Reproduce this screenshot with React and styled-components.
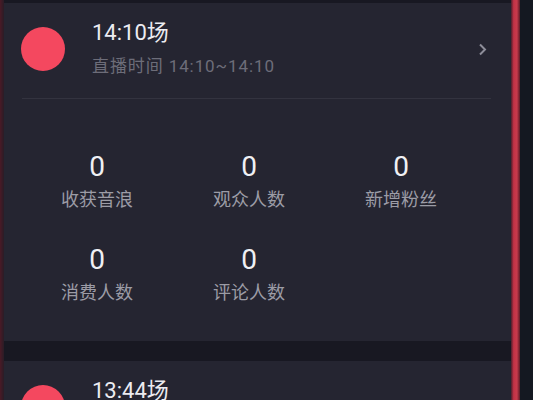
import React from 'react'
import styled, {createGlobalStyle} from 'styled-components'

const Global = createGlobalStyle`
  html, body {
    margin: 0;
    padding: 0;
    background: #1b1b26;
    font-family: Roboto, "Noto Sans CJK SC", "Noto Sans", sans-serif;
  }
`

const Frame = styled.div`
  display: flex;
  width: 533px;
  height: 400px;
  overflow: hidden;
`

const LeftEdge = styled.div`
  width: 4px;
  background: linear-gradient(to right, #4a1a26, #2a1c26);
`

const Main = styled.div`
  flex: 1;
  display: flex;
  flex-direction: column;
  gap: 20px;
  padding-top: 3px;
  background: #181822;
`

const RedLine = styled.div`
  width: 9px;
  background: linear-gradient(to right, #4a1d2a, #c23246 30%, #c83a4c 65%, #5a1a26);
`

const RightStrip = styled.div`
  width: 13px;
  background: #141821;
`

const Card = styled.div`
  background: #252531;
  flex-shrink: 0;
  padding-bottom: ${p => (p.$open ? '36px' : '0')};
`

const Header = styled.div`
  display: flex;
  align-items: center;
  height: 92px;
  padding: 0 24px 0 17px;
`

const Dot = styled.div`
  width: 44px;
  height: 44px;
  border-radius: 50%;
  background: #f4485f;
  flex-shrink: 0;
`

const Info = styled.div`
  flex: 1;
  display: flex;
  flex-direction: column;
  margin-left: 27px;
  margin-top: -2px;
`

const Title = styled.div`
  font-size: 22px;
  line-height: 26px;
  color: #ececf1;
  margin-bottom: 9px;
`

const Sub = styled.div`
  font-size: 17px;
  line-height: 22px;
  color: #6d6d79;
  letter-spacing: 0.9px;
`

const Divider = styled.div`
  height: 1px;
  margin: 3px 20px 0 18px;
  background: #33333f;
`

const Stats = styled.div`
  display: grid;
  grid-template-columns: repeat(3, 152px);
  row-gap: 32px;
  padding: 52px 0 0 17px;
`

const Stat = styled.div`
  display: flex;
  flex-direction: column;
  align-items: center;
  gap: 5px;
`

const Num = styled.div`
  font-size: 28px;
  line-height: 32px;
  color: #f0f0f4;
`

const Label = styled.div`
  font-size: 18px;
  line-height: 24px;
  color: #9c9ca6;
`

const Chevron = () => (
  <svg width="9" height="13" viewBox="0 0 9 13">
    <path d="M2 1.5 L7 6.5 L2 11.5" fill="none" stroke="#8d8d99" strokeWidth="2" />
  </svg>
)

const sessions = [
  {
    title: '14:10场',
    time: '直播时间 14:10~14:10',
    stats: [
      ['0', '收获音浪'],
      ['0', '观众人数'],
      ['0', '新增粉丝'],
      ['0', '消费人数'],
      ['0', '评论人数'],
    ],
  },
  {title: '13:44场', time: '直播时间 13:44~13:50', stats: []},
]

const App = () => {
  return (
    <>
      <Global />
      <Frame>
        <LeftEdge />
        <Main>
          {sessions.map((s, i) => (
            <Card key={i} $open={s.stats.length > 0}>
              <Header>
                <Dot />
                <Info>
                  <Title>{s.title}</Title>
                  <Sub>{s.time}</Sub>
                </Info>
                <Chevron />
              </Header>
              {s.stats.length > 0 && (
                <>
                  <Divider />
                  <Stats>
                    {s.stats.map(([n, l]) => (
                      <Stat key={l}>
                        <Num>{n}</Num>
                        <Label>{l}</Label>
                      </Stat>
                    ))}
                  </Stats>
                </>
              )}
            </Card>
          ))}
        </Main>
        <RedLine />
        <RightStrip />
      </Frame>
    </>
  )
}

export default App
